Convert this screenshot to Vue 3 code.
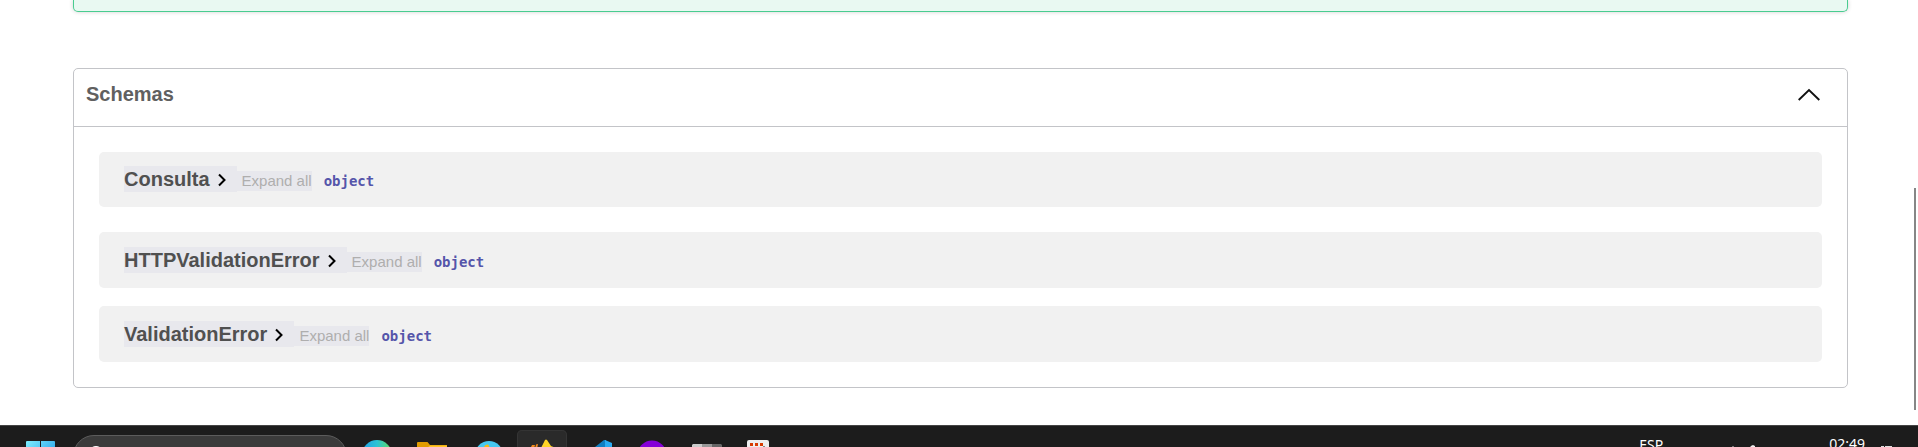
<script setup>
import { ref } from 'vue'

const open = ref(true)
const schemas = [
  { name: 'Consulta', type: 'object' },
  { name: 'HTTPValidationError', type: 'object' },
  { name: 'ValidationError', type: 'object' },
]
</script>

<template>
  <div class="screen">
    <main class="page">
      <div class="operation"></div>

      <section class="models">
        <h4 class="models-title">
          <button class="models-toggle" :aria-expanded="open" @click="open = !open">
            <span>Schemas</span>
            <svg class="arrow" viewBox="0 0 24 24" width="24" height="24" aria-hidden="true">
              <path d="M1.7 18 L12 8 L22.3 18" fill="none" stroke="#111" stroke-width="1.9" />
            </svg>
          </button>
        </h4>
        <div v-if="open" class="models-list">
          <article v-for="s in schemas" :key="s.name" class="model">
            <button class="model-name">
              <span>{{ s.name }}</span>
              <svg viewBox="0 0 12 16" width="12" height="16" aria-hidden="true">
                <path d="M3 3.5 L8.5 9 L3 14.5" fill="none" stroke="#000" stroke-width="2" />
              </svg>
            </button>
            <button class="expand">Expand all</button>
            <strong class="type">{{ s.type }}</strong>
          </article>
        </div>
      </section>
      <div class="scrollbar"></div>
    </main>

    <footer class="taskbar">
      <button class="start" aria-label="Start">
        <svg viewBox="0 0 30 30" width="30" height="30">
          <defs>
            <linearGradient id="win" x1="0" y1="0" x2="30" y2="30" gradientUnits="userSpaceOnUse">
              <stop offset="0" stop-color="#7deeff" />
              <stop offset="1" stop-color="#0a84e0" />
            </linearGradient>
          </defs>
          <path d="M0 1a1 1 0 0 1 1-1H14V14H0ZM15 0H28a1 1 0 0 1 1 1V14H15ZM0 15H14V29H0ZM15 15H29V29H15Z" fill="url(#win)" />
        </svg>
      </button>
      <div class="search">
        <svg viewBox="0 0 18 18" width="18" height="18" aria-hidden="true">
          <circle cx="8" cy="8" r="6" fill="none" stroke="#fff" stroke-width="2" />
          <path d="M12 12L17 17" stroke="#fff" stroke-width="2" />
        </svg>
        <input type="search" aria-label="Search" />
      </div>

      <div class="apps">
        <button aria-label="Edge">
          <svg viewBox="0 0 50 40" width="50" height="40">
            <defs>
              <linearGradient id="edge" x1="10" y1="0" x2="40" y2="0" gradientUnits="userSpaceOnUse">
                <stop offset="0" stop-color="#1fa0e8" />
                <stop offset="0.5" stop-color="#2bc3d4" />
                <stop offset="1" stop-color="#5fdc5a" />
              </linearGradient>
            </defs>
            <circle cx="25" cy="25" r="15" fill="url(#edge)" />
          </svg>
        </button>
        <button aria-label="Files">
          <svg viewBox="0 0 50 40" width="50" height="40">
            <path d="M10 13a1 1 0 0 1 1-1H20.5L23 15H40V34H10Z" fill="#e09b00" />
            <path d="M10 18H20L23 15.5H40V36H10Z" fill="#ffc629" />
          </svg>
        </button>
        <button aria-label="Browser">
          <svg viewBox="0 0 50 40" width="50" height="40">
            <circle cx="27" cy="25" r="14" fill="#45c8f0" />
            <path d="M22 17Q23 14 26 14.5Q28 16 27 20H22Z" fill="#f5b914" />
          </svg>
        </button>
        <button class="active" aria-label="Current app">
          <svg viewBox="0 0 50 40" width="50" height="40">
            <path d="M28 10Q29 9 30 10L34 16L39 18V24H21L25 16Z" fill="#ffd426" />
            <path d="M13 19L15 15L18 15L17 19ZM18 19L19 14.5L21 14L20 19Z" fill="#f28a1c" />
          </svg>
        </button>
        <button aria-label="Code editor">
          <svg viewBox="0 0 50 40" width="50" height="40">
            <path d="M23 17L32 10L34 10V24H20Z" fill="#0f7fc2" />
            <path d="M33 10L40 13V34H33Z" fill="#29aaf2" />
          </svg>
        </button>
        <button aria-label="Purple app">
          <svg viewBox="0 0 50 40" width="50" height="40">
            <circle cx="25" cy="25" r="14.5" fill="#8500d8" />
          </svg>
        </button>
        <button aria-label="Utility">
          <svg viewBox="0 0 50 40" width="50" height="40">
            <path d="M11 14H20V34H10V15Z" fill="#cbcbcb" />
            <path d="M20 14H30V34H20Z" fill="#989898" />
            <path d="M30 14H39L40 15V34H30Z" fill="#666" />
          </svg>
        </button>
        <button aria-label="Snipping tool">
          <svg viewBox="0 0 50 40" width="50" height="40">
            <rect x="10" y="10" width="22" height="24" rx="2" fill="#eee" />
            <path d="M13 13h3v3h-3zM18 13h3v3h-3zM23 13h3v3h-3z" fill="#d83b01" />
            <path d="M26 16h2v1h-2z" fill="#888" />
          </svg>
        </button>
      </div>

      <div class="tray">
        <span class="lang">ESP</span>
        <svg class="net" viewBox="0 0 30 20" width="30" height="20" aria-hidden="true">
          <path d="M1 11.5H3" stroke="#777" />
          <path d="M18 14Q19 11 22 10L24 11V14Z" fill="#eee" />
        </svg>
        <time class="clock">02:49</time>
        <svg class="bell" viewBox="0 0 14 20" width="14" height="20" aria-hidden="true">
          <path d="M1 11.5H4M5 11.5H12" stroke="#ddd" />
        </svg>
      </div>
    </footer>
  </div>
</template>

<style>
body {
  margin: 0;
  background: #fff;
}
</style>

<style scoped>
.screen {
  display: flex;
  flex-direction: column;
  height: 100vh;
  overflow: hidden;
  font-family: Arial, "Liberation Sans", sans-serif;
}
button {
  margin: 0;
  padding: 0;
  border: 0;
  background: none;
  font: inherit;
  color: inherit;
  cursor: pointer;
}
svg {
  display: block;
  flex: none;
}
.page {
  position: relative;
  flex: 1;
  padding: 0 70px 0 73px;
}
.operation {
  box-sizing: border-box;
  height: 12px;
  margin-bottom: 56px;
  border: 1px solid #49cc90;
  border-top: 0;
  border-radius: 0 0 5px 5px;
  background: #e9f9f2;
  box-shadow: 0 0 4px rgba(0, 0, 0, 0.19);
}
.models {
  border: 1px solid #c3c4c8;
  border-radius: 5px;
}
.models-title {
  margin: 0;
  border-bottom: 1px solid #c3c4c8;
  font-size: 20px;
  line-height: 24px;
  color: #606060;
}
.models-toggle {
  display: flex;
  align-items: center;
  justify-content: space-between;
  width: 100%;
  padding: 13px 26px 20px 12px;
}
.models-list {
  display: flex;
  flex-direction: column;
  padding: 25px;
}
.model {
  display: flex;
  align-items: baseline;
  padding: 15px 25px;
  border-radius: 5px;
  background: #f1f1f1;
}
.model:nth-child(1) {
  margin-bottom: 25px;
  padding-top: 14px;
}
.model:nth-child(2) {
  margin-bottom: 18px;
}
.model-name {
  display: flex;
  align-items: center;
  gap: 6px;
  padding-right: 9px;
  background: #e8e8ed;
  font-size: 20px;
  font-weight: 700;
  line-height: 26px;
  color: #505050;
}
.expand {
  padding-left: 5px;
  background: #e8e8ed;
  font-size: 15px;
  line-height: 20px;
  color: #afaeae;
}
.type {
  margin-left: 12px;
  font-family: "DejaVu Sans Mono", monospace;
  font-size: 14px;
  line-height: 20px;
  color: #5555aa;
}
.scrollbar {
  position: absolute;
  top: 188px;
  right: 2px;
  bottom: 15px;
  width: 2px;
  background: #868686;
}
.taskbar {
  display: flex;
  align-items: flex-start;
  box-sizing: border-box;
  height: 22px;
  overflow: hidden;
  border-top: 1px solid #444;
  background: #1c1c1c;
}
.start {
  margin: 15px 17px 0 26px;
}
.search {
  display: flex;
  box-sizing: border-box;
  width: 274px;
  height: 42px;
  margin-top: 9px;
  padding: 9px 14px;
  border: 1px solid #5c5c5c;
  border-radius: 21px;
  background: #3b3b3b;
}
.search input {
  flex: 1;
  min-width: 0;
  border: 0;
  outline: 0;
  background: none;
  color: #fff;
}
.apps {
  display: flex;
  gap: 5px;
  margin: 4px 0 0 5px;
}
.apps button {
  display: flex;
  align-items: flex-start;
  height: 50px;
  border-radius: 5px;
}
.apps .active {
  background: #2a2a2a;
  box-shadow: inset 0 0 0 1px #343434;
}
.tray {
  display: flex;
  align-items: flex-start;
  margin-left: auto;
  padding: 9px 24px 0 0;
  font-family: "Noto Sans", sans-serif;
  font-size: 14px;
  line-height: 20px;
  color: #fff;
}
.net {
  margin: 0 68px;
}
.clock {
  margin-top: -1px;
}
.bell {
  margin-left: 15px;
}
</style>
